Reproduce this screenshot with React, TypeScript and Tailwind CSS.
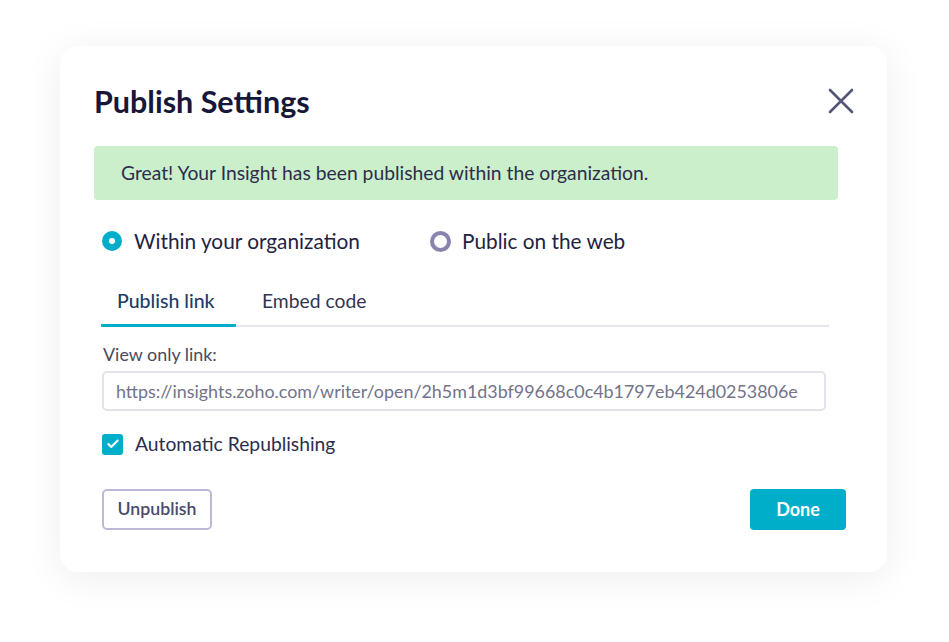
import { Check } from "lucide-react";

export default function App() {
  return (
    <div className="min-h-screen w-full bg-white flex items-start justify-center font-['Lato',sans-serif]">
      <div className="mt-[46px] -ml-[2px] w-[827px] rounded-[18px] bg-white shadow-[0_6px_40px_rgba(20,20,60,0.07)] pl-[34px] pr-[32px] pt-[37px] pb-[42px] relative">
        <button className="absolute right-[33px] top-[42px] w-[26px] h-[26px] flex items-center justify-center text-[#55557a]">
          <svg width="26" height="26" viewBox="0 0 26 26" fill="none" stroke="currentColor" strokeWidth="2.6" strokeLinecap="round">
            <path d="M2 2 L24 24 M24 2 L2 24" />
          </svg>
        </button>
        <h1 className="text-[30.5px] leading-[36px] font-bold text-[#17173a]">Publish Settings</h1>

        <div className="mt-[27px] w-[744px] h-[54px] rounded-[4px] bg-[#cbefcb] flex items-center pl-[27px] text-[19.3px] text-[#2d2d4b]">
          Great! Your Insight has been published within the organization.
        </div>

        <div className="mt-[29px] pl-[8px] flex items-center h-[24px]">
          <label className="flex items-center gap-[12px] w-[328px]">
            <span className="w-[20px] h-[20px] rounded-full bg-[#00aeca] flex items-center justify-center">
              <span className="w-[6px] h-[6px] rounded-full bg-white" />
            </span>
            <span className="text-[20.8px] text-[#23233f]">Within your organization</span>
          </label>
          <label className="flex items-center gap-[11px]">
            <span className="w-[21px] h-[21px] rounded-full border-[4px] border-[#8884ae]" />
            <span className="text-[20.8px] text-[#23233f]">Public on the web</span>
          </label>
        </div>

        <div className="mt-[26px] ml-[7px] w-[728px] h-[48px] border-b-[2px] border-[#e6e6f0] flex items-start">
          <div className="w-[135px] h-[48px] border-b-[3px] border-[#00aeca] rounded-b-[1px] pl-[16px] pt-[10px] text-[19.5px] leading-[24px] font-medium text-[#1c3d68]">
            Publish link
          </div>
          <div className="ml-[26px] pt-[10px] text-[19.3px] leading-[24px] text-[#34344f]">
            Embed code
          </div>
        </div>

        <div className="mt-[16px] ml-[9px] text-[17.9px] leading-[22px] text-[#4a4a60]">View only link:</div>

        <div className="mt-[6px] ml-[8px] w-[724px] h-[40px] rounded-[5px] border-[2px] border-[#e2e2ec] flex items-center pl-[12px] text-[17.9px] text-[#73738a]">
          https://insights.zoho.com/writer/open/2h5m1d3bf99668c0c4b1797eb424d0253806e
        </div>

        <label className="mt-[22px] ml-[8px] flex items-center gap-[12px] h-[22px]">
          <span className="w-[21px] h-[21px] rounded-[3px] bg-[#00aeca] flex items-center justify-center">
            <Check className="w-[14px] h-[14px] text-white" strokeWidth={3.5} />
          </span>
          <span className="text-[19.3px] text-[#2d2d4b]">Automatic Republishing</span>
        </label>

        <div className="mt-[34px] ml-[8px] w-[744px] flex items-center justify-between">
          <button className="w-[110px] h-[41px] rounded-[5px] border-[2px] border-[#bbb8d8] bg-white text-[17.7px] font-semibold text-[#4a4a6c]">
            Unpublish
          </button>
          <button className="w-[96px] h-[41px] rounded-[4px] bg-[#00aeca] text-[18px] font-bold text-white">
            Done
          </button>
        </div>
      </div>
    </div>
  );
}
